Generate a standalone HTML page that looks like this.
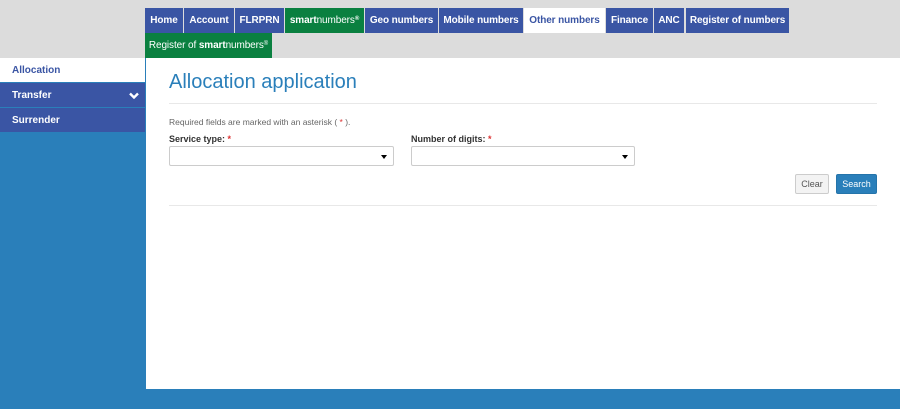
<!DOCTYPE html>
<html><head><style>
*{margin:0;padding:0;box-sizing:border-box}
body{width:900px;height:409px;background:#2a7fba;font-family:"Liberation Sans",sans-serif;position:relative;overflow:hidden}
#hdr{position:absolute;left:0;top:0;width:900px;height:58px;background:#dcdcdc}
.tab{position:absolute;top:8px;height:25px;background:#3a55a4;color:#fff;font-weight:bold;font-size:10px;line-height:25px;text-align:center;white-space:nowrap;letter-spacing:-0.1px}
.g{background:#0a8040}
.w{background:#fff;color:#3a55a4}
sup{font-size:6px;vertical-align:3px;line-height:0}
#side{position:absolute;left:0;top:58px;width:145px}
.si{height:25px;line-height:25px;padding-left:12px;font-size:10px;font-weight:bold;color:#fff;background:#3a55a4;border-bottom:1px solid #2a7fba;position:relative}
#main{position:absolute;left:146px;top:58px;width:754px;height:331px;background:#fff}
h1{position:absolute;left:23px;top:13px;font-weight:normal;font-size:20px;color:#2a7fba}
.hr{position:absolute;left:23px;width:708px;border-top:1px solid #e8e8e8}
.lbl{position:absolute;font-size:9px;font-weight:bold;color:#333}
.lbl span{color:#d33}
.sel{position:absolute;top:88px;width:225px;height:20px;border:1px solid #ccc;border-radius:2px}
.sel:after{content:"";position:absolute;right:6px;top:8px;border:3px solid transparent;border-top:4px solid #000}
.btn{position:absolute;top:116px;height:20px;font-size:9px;line-height:18px;text-align:center;border-radius:2px}
</style></head><body>
<div id="hdr">
<div class="tab" style="left:145px;width:38px">Home</div>
<div class="tab" style="left:184px;width:50px">Account</div>
<div class="tab" style="left:235px;width:49px">FLRPRN</div>
<div class="tab g" style="left:285px;width:79px">smart<span style="font-weight:normal">numbers</span><sup>®</sup></div>
<div class="tab" style="left:365px;width:73px">Geo numbers</div>
<div class="tab" style="left:439px;width:84px">Mobile numbers</div>
<div class="tab w" style="left:524px;width:81px">Other numbers</div>
<div class="tab" style="left:606px;width:47px">Finance</div>
<div class="tab" style="left:654px;width:30px">ANC</div>
<div class="tab" style="left:686px;width:103px">Register of numbers</div>
<div class="tab g" style="left:145px;top:33px;width:127px;font-weight:normal">Register of <b>smart</b>numbers<sup>®</sup></div>
</div>
<div id="side">
<div class="si" style="background:#fff;color:#3a55a4">Allocation</div>
<div class="si">Transfer<svg style="position:absolute;right:6px;top:9px" width="10" height="7" viewBox="0 0 10 7"><path d="M1 1.5 L5 5.5 L9 1.5" stroke="#fff" stroke-width="2.4" fill="none"/></svg></div>
<div class="si">Surrender</div>
</div>
<div id="main">
<h1>Allocation application</h1>
<div class="hr" style="top:45px"></div>
<div style="position:absolute;left:23px;top:59px;font-size:8.5px;color:#666">Required fields are marked with an asterisk ( <span style="color:#d33">*</span> ).</div>
<div class="lbl" style="left:23px;top:76px">Service type: <span>*</span></div>
<div class="lbl" style="left:265px;top:76px">Number of digits: <span>*</span></div>
<div class="sel" style="left:23px"></div>
<div class="sel" style="left:265px;width:224px"></div>
<div class="btn" style="left:649px;width:34px;border:1px solid #ccc;background:#f3f3f3;color:#555">Clear</div>
<div class="btn" style="left:690px;width:41px;background:#2a7fba;color:#fff;border:1px solid #2574aa">Search</div>
<div class="hr" style="top:147px"></div>
</div>
</body></html>
